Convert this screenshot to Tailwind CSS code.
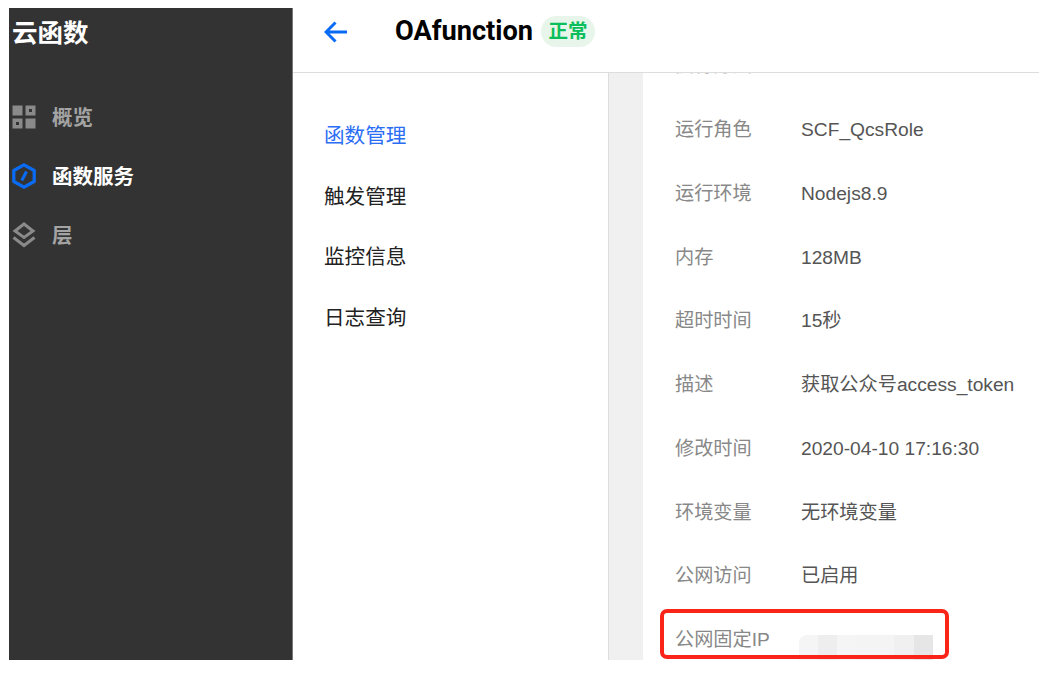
<!DOCTYPE html>
<html lang="zh-CN">
  <head>
    <meta charset="UTF-8" />
    <meta name="viewport" content="width=device-width, initial-scale=1.0" />
    <title>云函数</title>
    <script src="https://cdn.jsdelivr.net/npm/@tailwindcss/browser@4"></script>
  </head>
  <body class="bg-white font-['Liberation_Sans','Noto_Sans_CJK_SC',sans-serif]">
    <div class="w-[1044px] h-[675px] overflow-hidden pl-[9px] pr-[5px] pt-2">
      <div class="flex h-[652px] relative">
        <!-- sidebar -->
        <aside class="w-[284px] shrink-0 bg-[#333333] border-r border-[#777777]">
          <div class="h-[50px] pl-[3px] flex items-center text-[25.500px] font-bold text-white">云函数</div>
          <nav class="mt-[29.500px] text-[20.500px] font-bold">
            <a class="flex items-center h-[59px] pl-[3px] text-[#a3a3a3]">
              <svg class="w-6 h-6 shrink-0" viewBox="0 0 24 24" fill="#8a8a8a">
                <rect x="0.5" y="0.5" width="10" height="10" />
                <path fill-rule="evenodd" d="M13.5 .5h10v10h-10z M17 4v3h3V4z" />
                <path fill-rule="evenodd" d="M.5 13.5h10v10H.5z M4 17v3h3v-3z" />
                <rect x="13.5" y="13.5" width="10" height="10" />
              </svg>
              <span class="ml-4 pt-[3px]">概览</span>
            </a>
            <a class="flex items-center h-[59px] pl-[3px] text-white">
              <svg class="w-6 h-[26px] shrink-0" viewBox="0 0 24 26" fill="none" stroke="#0a6cf5">
                <path stroke-width="3.200" d="M12 1.800 22.200 7.500v11L12 24.200 1.800 18.500v-11z" />
                <path stroke-width="3" d="M14.500 8.500 9.800 17.500" />
              </svg>
              <span class="ml-4 pt-[3px]">函数服务</span>
            </a>
            <a class="flex items-center h-[59px] pl-[3px] text-[#a3a3a3]">
              <svg class="w-6 h-[26px] shrink-0" viewBox="0 0 24 26" fill="none" stroke="#8a8a8a" stroke-width="3">
                <path d="M12 2 21 9 12 15.500 3 9z" />
                <path d="M1.500 15.500 12 23.500l10.500-8" />
              </svg>
              <span class="ml-4 pt-[3px]">层</span>
            </a>
          </nav>
        </aside>

        <!-- main -->
        <main class="flex-1 flex flex-col min-w-0">
          <header class="h-[65px] shrink-0 flex items-center pb-[17px] border-b border-[#dddddd]">
            <svg class="ml-[31px] w-[24px] h-[24px]" viewBox="0 0 24 24" fill="none" stroke="#0a6cf5" stroke-width="3">
              <path d="M23 12H2.500M11.500 2.500 2 12l9.500 9.500" />
            </svg>
            <h1 class="ml-[47px] font-['Roboto','Noto_Sans_CJK_SC',sans-serif] text-[27.200px] font-bold text-black">OAfunction</h1>
            <span class="ml-2 h-[31px] w-[54px] flex items-center justify-center rounded-full bg-[#e8f5ea] text-[#0abf5b] text-[19.500px] font-bold">正常</span>
          </header>

          <div class="flex-1 flex min-h-0">
            <ul class="w-[315px] shrink-0 pl-[31px] pt-[33px] text-[20.600px] text-[#222222]">
              <li class="h-[60.750px] flex items-center text-[#2b6ef5]">函数管理</li>
              <li class="h-[60.750px] flex items-center">触发管理</li>
              <li class="h-[60.750px] flex items-center">监控信息</li>
              <li class="h-[60.750px] flex items-center">日志查询</li>
            </ul>
            <div class="w-[35px] shrink-0 bg-[#f0f0f0] border-l border-[#dddddd]"></div>
            <div class="flex-1 min-w-0 overflow-hidden pl-[32px] text-[19.200px]">
              <dl class="-mt-[38px]">
                <div class="h-[63.750px] flex items-center"><dt class="w-[126px] text-[#888888]">执行方法</dt><dd class="text-[#555555]"></dd></div>
                <div class="h-[63.750px] flex items-center"><dt class="w-[126px] text-[#888888]">运行角色</dt><dd class="text-[#555555]">SCF_QcsRole</dd></div>
                <div class="h-[63.750px] flex items-center"><dt class="w-[126px] text-[#888888]">运行环境</dt><dd class="text-[#555555]">Nodejs8.9</dd></div>
                <div class="h-[63.750px] flex items-center"><dt class="w-[126px] text-[#888888]">内存</dt><dd class="text-[#555555]">128MB</dd></div>
                <div class="h-[63.750px] flex items-center"><dt class="w-[126px] text-[#888888]">超时时间</dt><dd class="text-[#555555]">15秒</dd></div>
                <div class="h-[63.750px] flex items-center"><dt class="w-[126px] text-[#888888]">描述</dt><dd class="text-[#555555]">获取公众号access_token</dd></div>
                <div class="h-[63.750px] flex items-center"><dt class="w-[126px] text-[#888888]">修改时间</dt><dd class="text-[#555555]">2020-04-10 17:16:30</dd></div>
                <div class="h-[63.750px] flex items-center"><dt class="w-[126px] text-[#888888]">环境变量</dt><dd class="text-[#555555]">无环境变量</dd></div>
                <div class="h-[63.750px] flex items-center"><dt class="w-[126px] text-[#888888]">公网访问</dt><dd class="text-[#555555]">已启用</dd></div>
                <div class="h-[63.750px] flex items-center">
                  <dt class="w-[124px] text-[#888888]">公网固定IP</dt>
                  <dd class="flex h-[27px] mt-[16px]">
                    <span class="w-[19px] bg-[#f5f5f5] rounded-tl-lg"></span>
                    <span class="w-[19px] bg-[#eeeeee]"></span>
                    <span class="w-[19px] bg-[#f5f5f5]"></span>
                    <span class="w-[19px] bg-[#f4f4f4]"></span>
                    <span class="w-[19px] bg-[#f4f4f4]"></span>
                    <span class="w-[20px] bg-[#f0f0f0]"></span>
                    <span class="w-[19px] bg-[#e6e6e6]"></span>
                  </dd>
                </div>
              </dl>
            </div>
          </div>
        </main>

        <!-- red highlight drawn over the screenshot -->
        <div class="absolute left-[651px] top-[601px] w-[289px] h-[50px] border-[4px] border-[#fa2418] rounded-[7px]"></div>
      </div>
    </div>
  </body>
</html>
